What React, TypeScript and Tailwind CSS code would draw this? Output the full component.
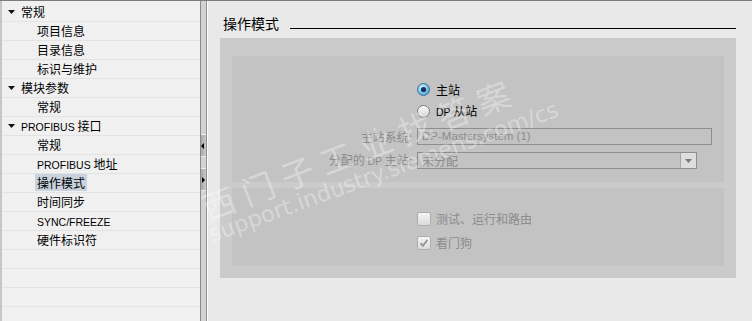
import React from "react"

const FONT = { fontFamily: '"Noto Sans CJK SC", "Liberation Sans", sans-serif' }

type Node = { label: React.ReactNode; level: number; selected?: boolean }

const Lat = ({ children }: { children: React.ReactNode }) => (
  <span className="text-[10.5px]" style={{ fontFamily: '"Liberation Sans", sans-serif' }}>{children}</span>
)

const TREE: Node[] = [
  { label: "常规", level: 0 },
  { label: "项目信息", level: 1 },
  { label: "目录信息", level: 1 },
  { label: "标识与维护", level: 1 },
  { label: "模块参数", level: 0 },
  { label: "常规", level: 1 },
  { label: <><Lat>PROFIBUS</Lat> 接口</>, level: 0 },
  { label: "常规", level: 1 },
  { label: <><Lat>PROFIBUS</Lat> 地址</>, level: 1 },
  { label: "操作模式", level: 1, selected: true },
  { label: "时间同步", level: 1 },
  { label: <Lat>SYNC/FREEZE</Lat>, level: 1 },
  { label: "硬件标识符", level: 1 },
]

function Caret() {
  return (
    <svg width="7" height="4" viewBox="0 0 7 4" className="shrink-0">
      <path d="M0 0h7L3.5 4z" fill="#111" />
    </svg>
  )
}

function Radio({ checked }: { checked?: boolean }) {
  return (
    <svg width="13" height="13" viewBox="0 0 13 13" className="shrink-0">
      <defs>
        <radialGradient id="rOn" cx="40%" cy="35%" r="70%">
          <stop offset="0" stopColor="#d8f2ff" />
          <stop offset="1" stopColor="#3f9fd8" />
        </radialGradient>
        <linearGradient id="rOff" x1="0" y1="0" x2="0" y2="1">
          <stop offset="0" stopColor="#ffffff" />
          <stop offset="1" stopColor="#d2d2d2" />
        </linearGradient>
      </defs>
      {checked ? (
        <>
          <circle cx="6.5" cy="6.5" r="6" fill="url(#rOn)" stroke="#3b6f97" />
          <circle cx="6.5" cy="6.5" r="2.6" fill="#0f3558" />
        </>
      ) : (
        <circle cx="6.5" cy="6.5" r="6" fill="url(#rOff)" stroke="#7c7c7c" />
      )}
    </svg>
  )
}

function Check({ checked }: { checked?: boolean }) {
  return (
    <svg width="14" height="14" viewBox="0 0 14 14" className="shrink-0">
      <defs>
        <linearGradient id="cb" x1="0" y1="0" x2="0" y2="1">
          <stop offset="0" stopColor="#f7f7f7" />
          <stop offset="1" stopColor="#dadada" />
        </linearGradient>
      </defs>
      <rect x="0.5" y="0.5" width="13" height="13" rx="2" fill="url(#cb)" stroke="#acacac" />
      {checked && <path d="M3.5 7.2l2.4 2.6 4.6-6" fill="none" stroke="#9a9a9a" strokeWidth="2" />}
    </svg>
  )
}

export default function App() {
  const rows = [...TREE, ...Array.from({ length: 5 }, () => null)]
  return (
    <div className="relative flex h-[321px] w-[752px] flex-col overflow-hidden bg-[#e9e9e9] text-[12px]" style={FONT}>
      <div className="h-px shrink-0 bg-[#7d7d7d]" />
      <div className="flex min-h-0 flex-1">
        {/* tree */}
        <div className="flex w-[200px] shrink-0 border-l-2 border-[#c6c6c6] bg-[#f0f0f0]">
          <div className="flex-1 overflow-hidden pt-[2px]">
            {rows.map((n, i) => (
              <div key={i} className="flex h-[19px] items-center border-b border-[#e3e3e3] text-black">
                {n && n.level === 0 && (
                  <div className="flex items-center gap-[6px] pl-[6px]">
                    <Caret />
                    <span className="leading-[16px]">{n.label}</span>
                  </div>
                )}
                {n && n.level === 1 && (
                  <div className="pl-[33px]">
                    <span className={`px-[2px] leading-[16px] ${n.selected ? "bg-[#c9d3de]" : ""}`}>{n.label}</span>
                  </div>
                )}
              </div>
            ))}
          </div>
        </div>

        {/* splitter */}
        <div className="flex w-[8px] shrink-0">
          <div className="w-px bg-[#8a8a8a]" />
          <div className="flex w-[5px] flex-col bg-[#d3d3d3] pt-[133px]">
            <div className="flex h-[23px] items-center border-y border-[#eeeeee] bg-gradient-to-r from-[#a9a9a9] to-[#c9c9c9]">
              <svg width="3" height="6" viewBox="0 0 3 6"><path d="M3 0v6L0 3z" fill="#000" /></svg>
            </div>
            <div className="mt-[11px] flex h-[23px] items-center border-y border-[#eeeeee] bg-gradient-to-r from-[#a9a9a9] to-[#c9c9c9] pl-[1px]">
              <svg width="3" height="6" viewBox="0 0 3 6"><path d="M0 0v6l3-3z" fill="#000" /></svg>
            </div>
          </div>
          <div className="w-px bg-[#8e8e8e]" />
          <div className="w-px bg-white" />
        </div>

        {/* content */}
        <div className="flex flex-1 flex-col pl-[12px] pr-[16px]">
          <div className="flex h-[28px] items-end pl-[3px]">
            <span className="mb-[-3px] text-[14px] leading-[18px] text-black">操作模式</span>
            <div className="ml-[11px] h-px flex-1 bg-black" />
          </div>
          <div className="mt-[9px] flex h-[240px] flex-col gap-[6px] bg-[#cbcbcb] px-[12px] pb-[12px] pt-[18px]">
            <div className="flex h-[126px] flex-col bg-[#c3c3c3] pt-[27px]">
              <div className="ml-[185px] flex h-[13px] items-center gap-[6px] text-black">
                <Radio checked />
                <span className="leading-[16px]">主站</span>
              </div>
              <div className="ml-[185px] mt-[9px] flex h-[13px] items-center gap-[6px] text-black">
                <Radio />
                <span className="leading-[16px]"><Lat>DP</Lat> 从站</span>
              </div>
              <div className="mt-[10px] flex items-center text-[#8b8b8b]">
                <div className="w-[180px] text-right leading-[16px]">主站系统:</div>
                <div className="ml-[5px] flex h-[17px] w-[295px] items-center border border-[#8e8e8e] pl-[4px]">
                  <span className="text-[11.5px]" style={{ fontFamily: '"Liberation Sans", sans-serif' }}>DP-Mastersystem (1)</span>
                </div>
              </div>
              <div className="mt-[7px] flex items-center text-[#8b8b8b]">
                <div className="w-[180px] text-right leading-[16px]">分配的 <Lat>DP</Lat> 主站:</div>
                <div className="ml-[5px] flex h-[17px] w-[280px] items-center border border-[#8e8e8e]">
                  <span className="flex-1 pl-[4px] leading-[15px]">未分配</span>
                  <div className="flex h-full w-[16px] items-center justify-center border-l border-[#a8a8a8] bg-[#dedede]">
                    <svg width="7" height="4" viewBox="0 0 7 4"><path d="M0 0h7L3.5 4z" fill="#7a7a7a" /></svg>
                  </div>
                </div>
              </div>
            </div>
            <div className="flex h-[78px] flex-col bg-[#c3c3c3] pl-[185px] pt-[24px] text-[#8b8b8b]">
              <div className="flex h-[14px] items-center gap-[5px]">
                <Check />
                <span className="leading-[16px]">测试、运行和路由</span>
              </div>
              <div className="mt-[10px] flex h-[14px] items-center gap-[5px]">
                <Check checked />
                <span className="leading-[16px]">看门狗</span>
              </div>
            </div>
          </div>
        </div>
      </div>

      {/* watermark */}
      <div className="pointer-events-none absolute left-[209px] top-[190px] origin-bottom-left -rotate-[21deg] whitespace-nowrap text-[33px] leading-[34px] tracking-[9px] text-white/35">
        西门子工业找答案
      </div>
      <div
        className="pointer-events-none absolute left-[214px] top-[221px] origin-bottom-left -rotate-[20deg] whitespace-nowrap text-[22.5px] leading-[26px] text-white/35"
        style={{ fontFamily: '"DejaVu Sans", sans-serif' }}
      >
        support.industry.siemens.com/cs
      </div>
    </div>
  )
}
